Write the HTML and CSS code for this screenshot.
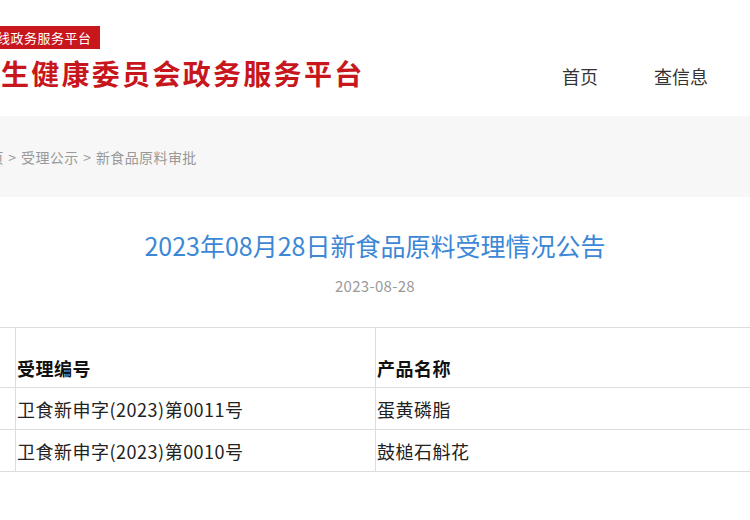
FILE: index.html
```html
<!DOCTYPE html>
<html>
<head>
  <meta charset="utf-8">
  <link rel="stylesheet" href="styles.css">
  <title>新食品原料受理情况公告</title>
</head>
<body>
  <div class="header">
    <div class="logo">
      <span class="badge">全国一体化在线政务服务平台</span>
      <div class="site-name">国家卫生健康委员会政务服务平台</div>
    </div>
    <ul class="nav">
      <li>首页</li>
      <li>查信息</li>
    </ul>
  </div>

  <div class="crumbs">
    <p>首页 &gt; 受理公示 &gt; 新食品原料审批</p>
  </div>

  <div class="article">
    <h1>2023年08月28日新食品原料受理情况公告</h1>
    <p class="date">2023-08-28</p>
  </div>

  <table class="list">
    <tr class="head">
      <th class="idx"></th>
      <th class="code">受理编号</th>
      <th>产品名称</th>
    </tr>
    <tr>
      <td class="idx"></td>
      <td class="code">卫食新申字(2023)第0011号</td>
      <td>蛋黄磷脂</td>
    </tr>
    <tr>
      <td class="idx"></td>
      <td class="code">卫食新申字(2023)第0010号</td>
      <td>鼓槌石斛花</td>
    </tr>
  </table>
</body>
</html>
```

FILE: styles.css
```css
/* notice page */
html, body {
  overflow-x: hidden;
}

body {
  margin: 0;
  font-family: "Noto Sans CJK SC", "Noto Sans", sans-serif;
  background-color: #fff;
  color: #333;
}

.header {
  display: flex;
  height: 116px;
}

.logo {
  display: flex;
  flex-direction: column;
  align-items: flex-start;
  margin-left: -90px;
  padding-top: 26px;
}

.badge {
  background-color: #c8161d;
  color: #fff;
  font-size: 13px;
  line-height: 23px;
  letter-spacing: 0.5px;
  padding: 0 8px 0 6px;
}

.site-name {
  margin-top: 7px;
  font-size: 28px;
  line-height: 34px;
  font-weight: bold;
  letter-spacing: 2.3px;
  color: #c8161d;
}

.nav {
  display: flex;
  gap: 56px;
  list-style: none;
  margin: 0 42px 0 auto;
  padding: 63px 0 0;
  font-size: 18px;
  line-height: 26px;
  color: #333;
}

.crumbs {
  display: flex;
  align-items: center;
  height: 81px;
  background-color: #f7f7f7;
}

.crumbs p {
  margin: 0 0 0 -25px;
  font-size: 14px;
  color: #999;
  letter-spacing: 0.4px;
  word-spacing: 1px;
}

.article {
  text-align: center;
  padding-top: 31px;
}

.article h1 {
  margin: 0;
  font-size: 25px;
  line-height: 34px;
  font-weight: normal;
  color: #3c87d6;
}

.article .date {
  margin: 14px 0 0;
  font-size: 15px;
  line-height: 20px;
  letter-spacing: 0.3px;
  color: #999;
}

table.list {
  margin: 31px 0 0 -45px;
  width: 900px;
  border-collapse: collapse;
  font-size: 18px;
  letter-spacing: 0.5px;
  color: #222;
}

.list th, .list td {
  border: 1px solid #ddd;
  padding: 0 1px;
  text-align: left;
  line-height: 26px;
}

.list td {
  height: 41px;
}

.list tr.head th {
  height: 53px;
  padding-bottom: 6px;
  vertical-align: bottom;
  color: #111;
}

.list .idx {
  width: 57px;
}

.list .code {
  width: 357px;
}
```
